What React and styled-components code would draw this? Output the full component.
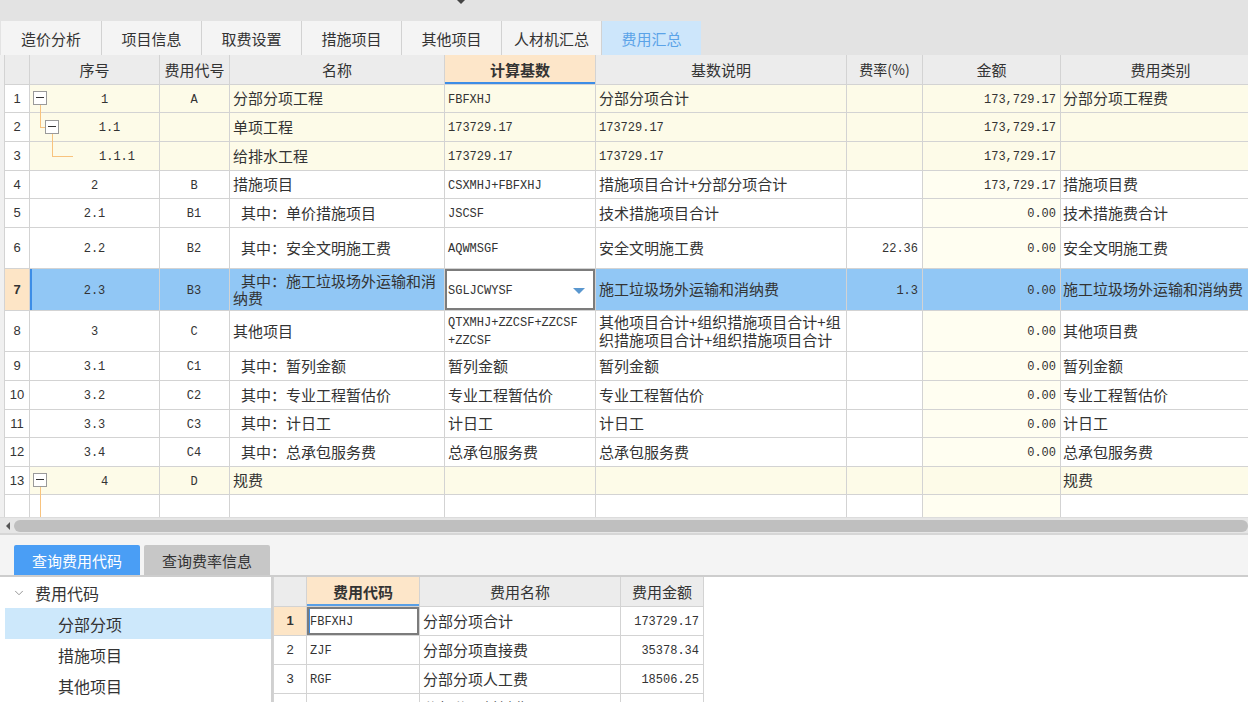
import React from "react";
import styled, { createGlobalStyle, css } from "styled-components";
import { ChevronDown } from "lucide-react";

const GlobalStyle = createGlobalStyle`
  html, body {
    margin: 0;
    padding: 0;
    background: #ffffff;
    font-family: "Noto Sans CJK SC", "Noto Sans", sans-serif;
    color: #333;
  }
  * { box-sizing: border-box; }
`;

const CJK = `"Noto Sans CJK SC", "Noto Sans", sans-serif`;
const MONO = `"Liberation Mono", "Noto Sans CJK SC", monospace`;

const Page = styled.div`
  width: 1248px;
  height: 702px;
  overflow: hidden;
  display: flex;
  flex-direction: column;
  & > * { flex-shrink: 0; }
`;

const TopBar = styled.div`
  height: 21px;
  background: #e3e3e3;
  position: relative;
`;

const TopArrow = styled.div`
  position: absolute;
  left: 457px;
  top: 0;
  width: 0;
  height: 0;
  border-left: 4px solid transparent;
  border-right: 4px solid transparent;
  border-top: 4px solid #444;
`;

const TabBar = styled.div`
  display: flex;
  height: 34px;
  background: #e3e3e3;
  padding-left: 1px;
`;

const Tab = styled.div`
  width: 100px;
  height: 34px;
  display: flex;
  align-items: center;
  justify-content: center;
  font-size: 15px;
  border-left: 1px solid #d2d2d2;
  background: ${p => (p.$active ? "#cde6fb" : "#f4f4f4")};
  color: ${p => (p.$active ? "#5ba3e8" : "#333")};
  &:first-child { border-left: none; }
`;

const GridArea = styled.div`
  height: 462px;
  background: #f0f0f0;
  padding-left: 4px;
  overflow: hidden;
`;

const Grid = styled.table`
  border-collapse: collapse;
  table-layout: fixed;
  background: #fff;
  border-left: 1px solid #cfcfcf;
`;

const HeadCell = styled.th`
  height: 29px;
  padding: 0;
  font-weight: ${p => (p.$hot ? 700 : 400)};
  font-size: ${p => (p.$small ? "14px" : "15px")};
  font-family: ${CJK};
  color: #333;
  background: ${p => (p.$hot ? "#fde6c9" : "#ececec")};
  border: 1px solid #d3d3d3;
  border-top: none;
  ${p => p.$hot && css`box-shadow: inset 0 -2px 0 #3d8de6;`}
`;

const Row = styled.tr`
  background: ${p => (p.$sel ? "#91c7f5" : p.$yellow ? "#fdfbe8" : "#ffffff")};
`;

const Cell = styled.td`
  height: ${p => p.$h}px;
  padding: 0 4px 0 3px;
  border: 1px solid #d3d3d3;
  font-size: 15px;
  line-height: 18px;
  font-family: ${p => (p.$mono ? MONO : CJK)};
  ${p => p.$mono && css`font-size: 12px; padding-top: 3px;`}
  text-align: ${p => p.$align || "left"};
  vertical-align: middle;
  white-space: nowrap;
  overflow: hidden;
  ${p => p.$wrap && css`white-space: normal; line-height: 17px;`}
  ${p => p.$amount && !p.$rowBg && css`background: #fffef1;`}
`;

const NumCell = styled.td`
  padding: 0;
  border: 1px solid #d3d3d3;
  text-align: center;
  font-family: "Liberation Sans", sans-serif;
  font-size: 13px;
  color: #333;
  background: ${p => (p.$sel ? "#fde5c6" : "#ffffff")};
  font-weight: ${p => (p.$sel ? 700 : 400)};
`;

const SeqCell = styled.td`
  position: relative;
  padding: 3px 0 0;
  border: 1px solid #d3d3d3;
  font-family: ${MONO};
  font-size: 12px;
  ${p => p.$sel && css`box-shadow: inset 2px 0 0 #3d8de6;`}
`;

const SeqText = styled.div`
  padding-left: ${p => p.$indent}px;
  text-align: center;
`;

const Plus = styled.span`
  position: absolute;
  left: ${p => p.$x}px;
  top: ${p => p.$y}px;
  width: 14px;
  height: 14px;
  border: 1px solid #9a9a9a;
  background: #fff;
  &::after {
    content: "";
    position: absolute;
    left: 2px;
    right: 2px;
    top: 5px;
    height: 1px;
    background: #333;
  }
`;

const TreeLine = styled.span`
  position: absolute;
  left: ${p => p.$x}px;
  top: ${p => p.$y}px;
  width: ${p => p.$w}px;
  height: ${p => p.$h}px;
  background: #f8c37e;
`;

const EditCell = styled.td`
  padding: 3px 4px 0 3px;
  border: 1px solid #d3d3d3;
  background: #fff;
  font-family: ${MONO};
  font-size: 12px;
  box-shadow: inset 0 0 0 2px #7c7c7c;
`;

const EditInner = styled.div`
  display: flex;
  align-items: center;
  justify-content: space-between;
  padding-right: 6px;
`;

const DropTri = styled.span`
  width: 0;
  height: 0;
  border-left: 6px solid transparent;
  border-right: 6px solid transparent;
  border-top: 6px solid #5a97cf;
`;

const Indent = styled.span`
  display: inline-block;
  width: 8px;
`;

const ScrollBar = styled.div`
  height: 16px;
  background: #e6e6e6;
  display: flex;
  align-items: center;
  padding: 0 0 0 6px;
  gap: 4px;
  border-top: 1px solid #dcdcdc;
`;

const ScrollArrow = styled.span`
  width: 0;
  height: 0;
  border-top: 4px solid transparent;
  border-bottom: 4px solid transparent;
  border-right: 4px solid #555;
`;

const Thumb = styled.div`
  flex: 1;
  height: 12px;
  border-radius: 6px;
  background: #bfbfbf;
`;

const LowerTabs = styled.div`
  height: 44px;
  background: #f4f4f4;
  display: flex;
  align-items: flex-end;
  gap: 4px;
  padding-left: 14px;
  border-top: 2px solid #d6d6d6;
  border-bottom: 2px solid #cdcdcd;
`;

const LowerTab = styled.div`
  width: 126px;
  height: 30px;
  display: flex;
  align-items: center;
  justify-content: center;
  font-size: 15px;
  background: ${p => (p.$active ? "#4a9ef5" : "#c7c7c7")};
  color: ${p => (p.$active ? "#fff" : "#333")};
  border-radius: 2px 2px 0 0;
`;

const Lower = styled.div`
  flex: 1;
  display: flex;
  background: #fff;
`;

const TreePanel = styled.div`
  width: 273px;
  padding-left: 5px;
  border-right: 2px solid #d0d0d0;
  display: flex;
  flex-direction: column;
`;

const TreeItem = styled.div`
  height: 31px;
  flex-shrink: 0;
  display: flex;
  align-items: center;
  font-size: 16px;
  color: #333;
  padding-left: ${p => p.$pad}px;
  background: ${p => (p.$sel ? "#cde8fb" : "transparent")};
  gap: 9px;
`;

const CodeTable = styled.table`
  border-collapse: collapse;
  table-layout: fixed;
  align-self: flex-start;
`;

const CodeHead = styled.th`
  height: 29px;
  padding: 0;
  font-family: ${CJK};
  font-size: 15px;
  font-weight: ${p => (p.$hot ? 700 : 400)};
  color: #333;
  background: ${p => (p.$hot ? "#fde6c9" : "#ececec")};
  border: 1px solid #d3d3d3;
  border-top: none;
  ${p => p.$hot && css`box-shadow: inset 0 -2px 0 #5aa0e6;`}
`;

const CodeCell = styled.td`
  height: 29px;
  padding: 0 4px 0 3px;
  border: 1px solid #d3d3d3;
  font-family: ${p => (p.$mono ? MONO : CJK)};
  font-size: ${p => (p.$mono ? "12px" : "15px")};
  ${p => p.$mono && css`padding-top: 3px;`}
  text-align: ${p => p.$align || "left"};
  white-space: nowrap;
  overflow: hidden;
  ${p => p.$focus && css`box-shadow: inset 0 0 0 2px #7c7c7c, inset 3px 0 0 #3d8de6;`}
`;

const CodeNum = styled.td`
  padding: 0;
  border: 1px solid #d3d3d3;
  text-align: center;
  font-family: "Liberation Sans", sans-serif;
  font-size: 13px;
  font-weight: ${p => (p.$sel ? 700 : 400)};
  background: ${p => (p.$sel ? "#fde5c6" : "#fff")};
`;

const mainCols = [25, 130, 70, 215, 151, 251, 76, 138, 200];

const rows = [
  { n: 1, seq: "1", code: "A", name: "分部分项工程", base: "FBFXHJ", desc: "分部分项合计", rate: "", amt: "173,729.17", cat: "分部分项工程费", yellow: true, tree: "r1", h: 28 },
  { n: 2, seq: "1.1", code: "", name: "单项工程", base: "173729.17", desc: "173729.17", descMono: true, rate: "", amt: "173,729.17", cat: "", yellow: true, tree: "r2", h: 29 },
  { n: 3, seq: "1.1.1", code: "", name: "给排水工程", base: "173729.17", desc: "173729.17", descMono: true, rate: "", amt: "173,729.17", cat: "", yellow: true, tree: "r3", h: 29 },
  { n: 4, seq: "2", code: "B", name: "措施项目", base: "CSXMHJ+FBFXHJ", desc: "措施项目合计+分部分项合计", rate: "", amt: "173,729.17", cat: "措施项目费", h: 28 },
  { n: 5, seq: "2.1", code: "B1", name: "其中：单价措施项目", sub: true, base: "JSCSF", desc: "技术措施项目合计", rate: "", amt: "0.00", cat: "技术措施费合计", h: 29 },
  { n: 6, seq: "2.2", code: "B2", name: "其中：安全文明施工费", sub: true, base: "AQWMSGF", desc: "安全文明施工费", rate: "22.36", amt: "0.00", cat: "安全文明施工费", h: 41 },
  { n: 7, seq: "2.3", code: "B3", name: "其中：施工垃圾场外运输和消纳费", sub: true, base: "SGLJCWYSF", desc: "施工垃圾场外运输和消纳费", rate: "1.3", amt: "0.00", cat: "施工垃圾场外运输和消纳费", sel: true, h: 42 },
  { n: 8, seq: "3", code: "C", name: "其他项目", base: ["QTXMHJ+ZZCSF+ZZCSF", "+ZZCSF"], desc: ["其他项目合计+组织措施项目合计+组", "织措施项目合计+组织措施项目合计"], rate: "", amt: "0.00", cat: "其他项目费", h: 41 },
  { n: 9, seq: "3.1", code: "C1", name: "其中：暂列金额", sub: true, base: "暂列金额", baseCjk: true, desc: "暂列金额", rate: "", amt: "0.00", cat: "暂列金额", h: 29 },
  { n: 10, seq: "3.2", code: "C2", name: "其中：专业工程暂估价", sub: true, base: "专业工程暂估价", baseCjk: true, desc: "专业工程暂估价", rate: "", amt: "0.00", cat: "专业工程暂估价", h: 29 },
  { n: 11, seq: "3.3", code: "C3", name: "其中：计日工", sub: true, base: "计日工", baseCjk: true, desc: "计日工", rate: "", amt: "0.00", cat: "计日工", h: 28 },
  { n: 12, seq: "3.4", code: "C4", name: "其中：总承包服务费", sub: true, base: "总承包服务费", baseCjk: true, desc: "总承包服务费", rate: "", amt: "0.00", cat: "总承包服务费", h: 29 },
  { n: 13, seq: "4", code: "D", name: "规费", base: "", desc: "", rate: "", amt: "", cat: "规费", yellow: true, tree: "r13", h: 28 },
  { n: "", seq: "", code: "", name: "", base: "", desc: "", rate: "", amt: "", cat: "", tree: "r14", h: 29 },
];

const lines = v => (Array.isArray(v) ? v.map((t, i) => <div key={i}>{t}</div>) : v);

const TreeMarks = ({ kind }) => {
  if (kind === "r1")
    return (
      <>
        <Plus $x={3} $y={6} />
        <TreeLine $x={10} $y={20} $w={1} $h={9} />
      </>
    );
  if (kind === "r2")
    return (
      <>
        <TreeLine $x={10} $y={0} $w={1} $h={15} />
        <TreeLine $x={10} $y={14} $w={6} $h={1} />
        <Plus $x={15} $y={7} />
        <TreeLine $x={22} $y={21} $w={1} $h={9} />
      </>
    );
  if (kind === "r3")
    return (
      <>
        <TreeLine $x={22} $y={0} $w={1} $h={15} />
        <TreeLine $x={22} $y={14} $w={21} $h={1} />
      </>
    );
  if (kind === "r13")
    return (
      <>
        <Plus $x={3} $y={6} />
        <TreeLine $x={10} $y={20} $w={1} $h={9} />
      </>
    );
  if (kind === "r14") return <TreeLine $x={10} $y={0} $w={1} $h={29} />;
  return null;
};

const indentFor = { r1: 20, r2: 30, r3: 45, r13: 20 };

const MainGrid = () => (
  <Grid style={{ width: mainCols.reduce((a, b) => a + b, 0) }}>
    <colgroup>
      {mainCols.map((w, i) => (
        <col key={i} style={{ width: w }} />
      ))}
    </colgroup>
    <thead>
      <tr>
        <HeadCell />
        <HeadCell>序号</HeadCell>
        <HeadCell>费用代号</HeadCell>
        <HeadCell>名称</HeadCell>
        <HeadCell $hot>计算基数</HeadCell>
        <HeadCell>基数说明</HeadCell>
        <HeadCell $small>费率(%)</HeadCell>
        <HeadCell>金额</HeadCell>
        <HeadCell>费用类别</HeadCell>
      </tr>
    </thead>
    <tbody>
      {rows.map((r, i) => {
        const rowBg = r.yellow || r.sel;
        return (
          <Row key={i} $yellow={r.yellow} $sel={r.sel}>
            <NumCell $sel={r.sel}>{r.n}</NumCell>
            <SeqCell $sel={r.sel}>
              {r.tree && <TreeMarks kind={r.tree} />}
              <SeqText $indent={indentFor[r.tree] || 0}>{r.seq}</SeqText>
            </SeqCell>
            <Cell $h={r.h} $mono $align="center">{r.code}</Cell>
            <Cell $h={r.h} $wrap={r.sel}>
              {r.sub && <Indent />}
              {r.name}
            </Cell>
            {r.sel ? (
              <EditCell>
                <EditInner>
                  <span>{r.base}</span>
                  <DropTri />
                </EditInner>
              </EditCell>
            ) : (
              <Cell $h={r.h} $mono={!r.baseCjk}>{lines(r.base)}</Cell>
            )}
            <Cell $h={r.h} $mono={r.descMono}>{lines(r.desc)}</Cell>
            <Cell $h={r.h} $mono $align="right">{r.rate}</Cell>
            <Cell $h={r.h} $mono $align="right" $amount $rowBg={rowBg}>{r.amt}</Cell>
            <Cell $h={r.h} style={{ paddingLeft: 2 }}>{r.cat}</Cell>
          </Row>
        );
      })}
    </tbody>
  </Grid>
);

const codeRows = [
  { n: 1, code: "FBFXHJ", name: "分部分项合计", amt: "173729.17", sel: true },
  { n: 2, code: "ZJF", name: "分部分项直接费", amt: "35378.34" },
  { n: 3, code: "RGF", name: "分部分项人工费", amt: "18506.25" },
  { n: 4, code: "CLF", name: "分部分项材料费", amt: "14612.18" },
];

const CodeGrid = () => (
  <CodeTable style={{ width: 430 }}>
    <colgroup>
      <col style={{ width: 33 }} />
      <col style={{ width: 113 }} />
      <col style={{ width: 201 }} />
      <col style={{ width: 83 }} />
    </colgroup>
    <thead>
      <tr>
        <CodeHead />
        <CodeHead $hot>费用代码</CodeHead>
        <CodeHead>费用名称</CodeHead>
        <CodeHead>费用金额</CodeHead>
      </tr>
    </thead>
    <tbody>
      {codeRows.map(r => (
        <tr key={r.n}>
          <CodeNum $sel={r.sel}>{r.n}</CodeNum>
          <CodeCell $mono $focus={r.sel}>{r.code}</CodeCell>
          <CodeCell>{r.name}</CodeCell>
          <CodeCell $mono $align="right">{r.amt}</CodeCell>
        </tr>
      ))}
    </tbody>
  </CodeTable>
);

const tabs = ["造价分析", "项目信息", "取费设置", "措施项目", "其他项目", "人材机汇总", "费用汇总"];

export default function App() {
  return (
    <Page>
      <GlobalStyle />
      <TopBar>
        <TopArrow />
      </TopBar>
      <TabBar>
        {tabs.map(t => (
          <Tab key={t} $active={t === "费用汇总"}>{t}</Tab>
        ))}
      </TabBar>
      <GridArea>
        <MainGrid />
      </GridArea>
      <ScrollBar>
        <ScrollArrow />
        <Thumb />
      </ScrollBar>
      <LowerTabs>
        <LowerTab $active>查询费用代码</LowerTab>
        <LowerTab>查询费率信息</LowerTab>
      </LowerTabs>
      <Lower>
        <TreePanel>
          <TreeItem $pad={7}>
            <ChevronDown size={14} color="#888" strokeWidth={1.5} />
            费用代码
          </TreeItem>
          <TreeItem $pad={53} $sel>分部分项</TreeItem>
          <TreeItem $pad={53}>措施项目</TreeItem>
          <TreeItem $pad={53}>其他项目</TreeItem>
        </TreePanel>
        <CodeGrid />
      </Lower>
    </Page>
  );
}
